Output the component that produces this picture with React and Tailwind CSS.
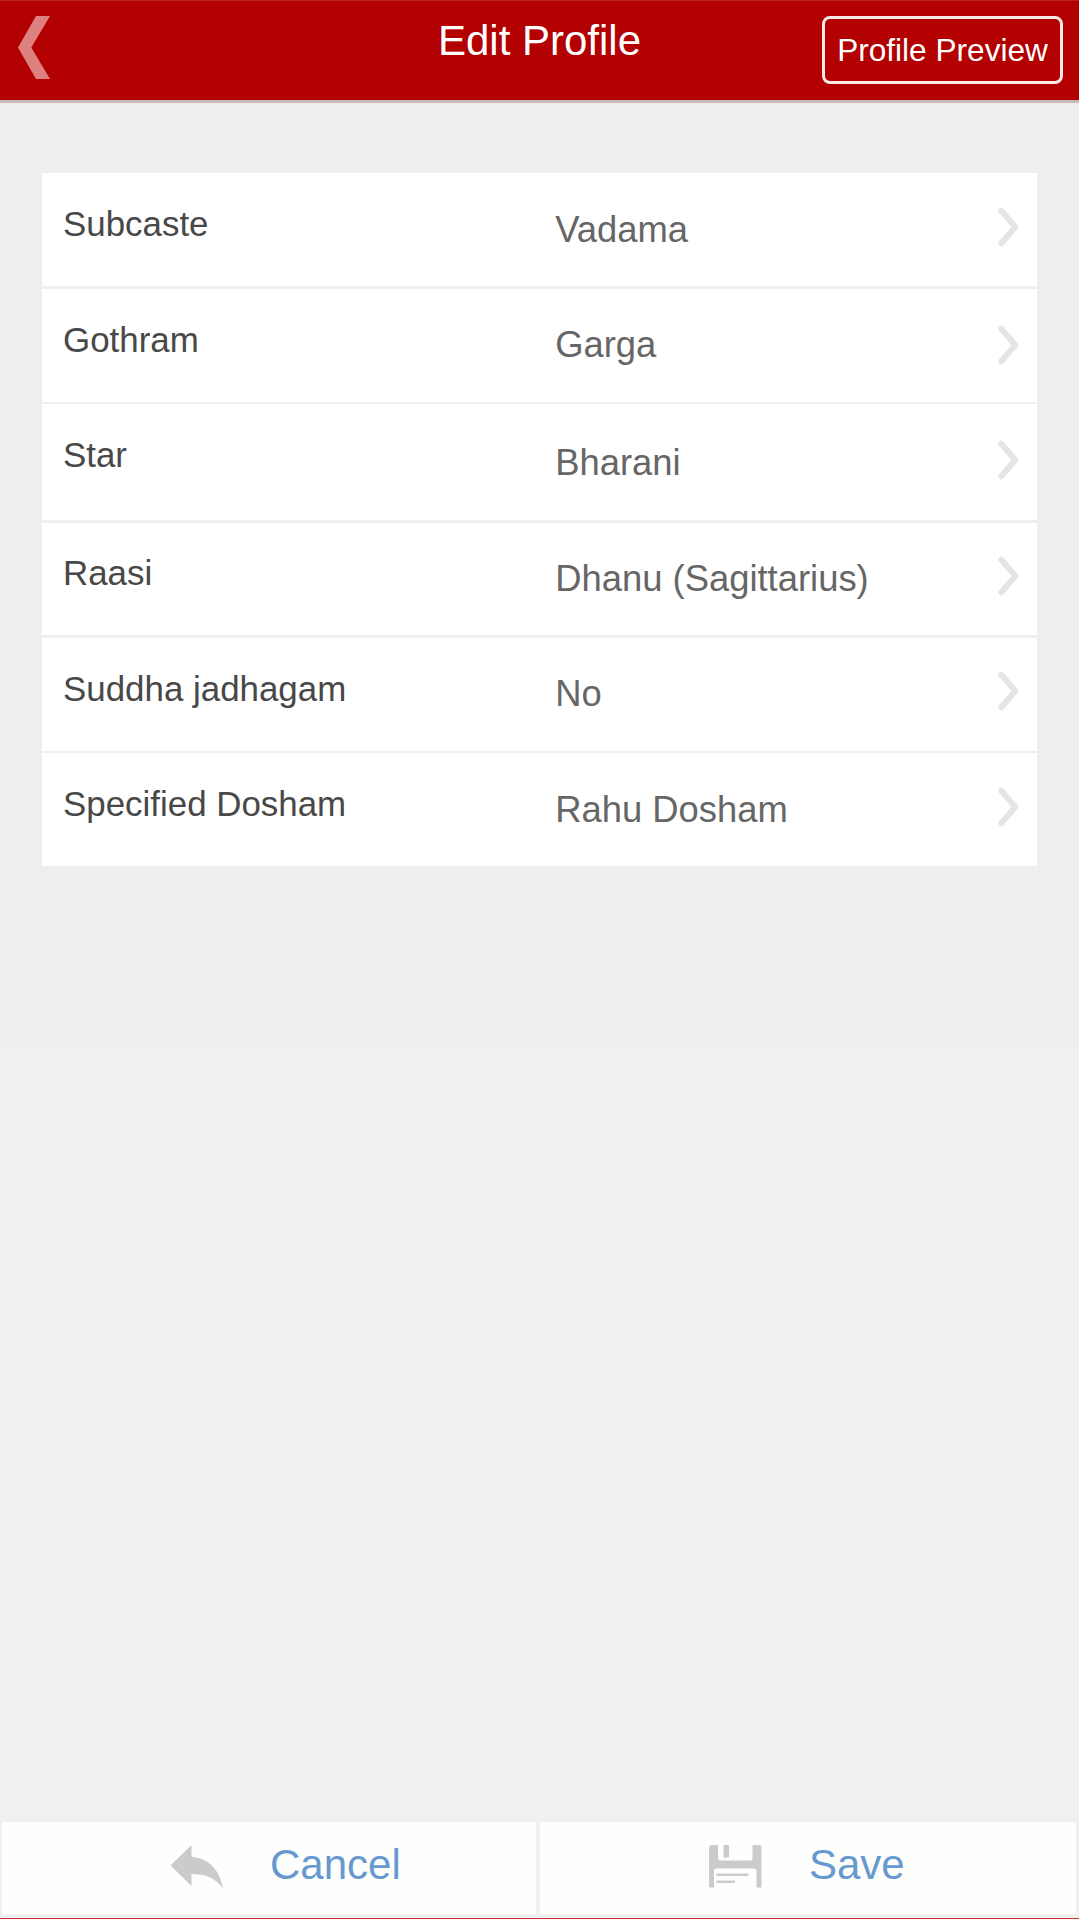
import React from "react";

const rows = [
  { label: "Subcaste", value: "Vadama", box: "h-[113px]", l: "mt-[34px]", v: "mt-[39px]", c: "mt-[34px]" },
  { label: "Gothram", value: "Garga", box: "h-[113px]", l: "mt-[34px]", v: "mt-[38px]", c: "mt-[36px]" },
  { label: "Star", value: "Bharani", box: "h-[116px]", l: "mt-[34px]", v: "mt-[41px]", c: "mt-[36px]" },
  { label: "Raasi", value: "Dhanu (Sagittarius)", box: "h-[112px]", l: "mt-[33px]", v: "mt-[38px]", c: "mt-[33px]" },
  { label: "Suddha jadhagam", value: "No", box: "h-[113px]", l: "mt-[34px]", v: "mt-[38px]", c: "mt-[33px]" },
  { label: "Specified Dosham", value: "Rahu Dosham", box: "h-[113px]", l: "mt-[34px]", v: "mt-[39px]", c: "mt-[34px]" },
];

const gaps = ["h-[3px]", "h-[2px]", "h-[3px]", "h-[3px]", "h-[2px]"];

function Chevron({ className }) {
  return (
    <svg className={className} width="22" height="40" viewBox="0 0 22 40" fill="none">
      <path d="M4.300 3.800L18.300 20L4.300 36.200" stroke="#e5e5e5" strokeWidth="6" strokeLinecap="round" strokeLinejoin="round" />
    </svg>
  );
}

function Header() {
  return (
    <header className="h-[103px] shrink-0 border-b border-[#ddb2b2] bg-[#bcbcbc] pb-[2px]">
      <div className="grid h-[100px] grid-cols-[1fr_auto_1fr] items-start border-t border-[#b8241f] bg-[#b30000] text-white">
        <svg className="mt-[15px] ml-[18px]" width="32" height="63" viewBox="0 0 32 63">
          <path d="M18 0H32L13.300 31.500L32 63H18L0 31.500Z" fill="#dd8080" />
        </svg>
        <h1 className="mt-[19px] text-[42px] leading-none">Edit Profile</h1>
        <button className="mt-[15px] mr-4 flex h-[68px] w-[241px] items-start justify-center justify-self-end rounded-[8px] border-[3px] border-[#fbe8e8] pt-[16px] text-[31.6px] leading-none whitespace-nowrap">
          Profile Preview
        </button>
      </div>
    </header>
  );
}

export default function App() {
  return (
    <div className="flex h-[1919px] w-[1079px] flex-col overflow-hidden border-b border-[#c83232] bg-[#f0f0f0] font-['Liberation_Sans',Arial,sans-serif]">
      <Header />
      <main className="h-[939px] shrink-0 bg-[#eeeeee] px-[42px] pt-[70px]">
        <div className="w-[995px]">
          {rows.map((r, i) => (
            <React.Fragment key={r.label}>
              <div className={`flex items-start bg-white pr-[18px] pl-[21px] ${r.box}`}>
                <div className={`w-[492.2px] text-[34.9px] leading-none text-[#484848] ${r.l}`}>{r.label}</div>
                <div className={`flex-1 text-[36.4px] leading-none text-[#666666] ${r.v}`}>{r.value}</div>
                <Chevron className={r.c} />
              </div>
              {i < gaps.length && <div className={`bg-[#efefef] ${gaps[i]}`} />}
            </React.Fragment>
          ))}
        </div>
      </main>
      <footer className="mt-auto mb-1 grid h-[92px] grid-cols-[534px_536px] gap-[4px] pl-[2px] text-[42px] leading-none text-[#6699cf]">
        <button className="flex items-start bg-[#fefefd] pl-[168px]">
          <svg className="mt-[23px]" width="53" height="43" viewBox="0 0 53 43">
            <path d="M0.500 20.500L21.500 0V12C37 12.500 49 23 53 43C44 32 35 29 21.500 29V41Z" fill="#cbcbca" />
          </svg>
          <span className="mt-[22px] ml-[47px]">Cancel</span>
        </button>
        <button className="flex items-start bg-[#fefefd] pl-[169px]">
          <svg className="mt-[23px]" width="53" height="43" viewBox="0 0 53 43" fill="#cbcbca">
            <path d="M3 0H9V13Q9 15.500 11.500 15.500H41Q43.500 15.500 43.500 13V0H50Q52.500 0 52.500 3V42.500H47.500V26Q47.500 23.500 45 23.500H7.500Q5 23.500 5 26V42.500H0V3Q0 0 3 0Z" />
            <path d="M14.500 0H20V12.500H14.500Z" />
            <path d="M7.500 28.500H39.500V31H7.500ZM7.500 35.500H26V38H7.500Z" />
          </svg>
          <span className="mt-[22px] ml-[47px]">Save</span>
        </button>
      </footer>
    </div>
  );
}
